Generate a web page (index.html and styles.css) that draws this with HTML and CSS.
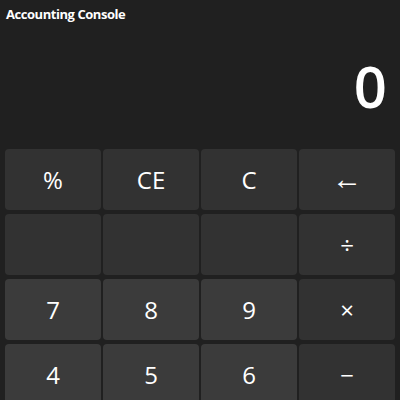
FILE: index.html
```html
<!DOCTYPE html>
<html>
<head>
<meta charset="utf-8">
<link rel="stylesheet" href="styles.css">
</head>
<body>
<div class="app">
  <div class="title">Accounting Console</div>
  <div class="display">0</div>
  <div class="keys">
    <button class="key op">%</button>
    <button class="key op">CE</button>
    <button class="key op">C</button>
    <button class="key op arrow">←</button>
    <button class="key op"></button>
    <button class="key op"></button>
    <button class="key op"></button>
    <button class="key op">÷</button>
    <button class="key num">7</button>
    <button class="key num">8</button>
    <button class="key num">9</button>
    <button class="key op">×</button>
    <button class="key num">4</button>
    <button class="key num">5</button>
    <button class="key num">6</button>
    <button class="key op">−</button>
  </div>
</div>
</body>
</html>
```
FILE: styles.css
```css
html, body {
  margin: 0;
  padding: 0;
  background: #202020;
  height: 100%;
  overflow: hidden;
}
.app {
  font-family: "Open Sans", "Noto Sans", sans-serif;
  color: #ffffff;
  display: flex;
  flex-direction: column;
}
.title {
  font-size: 13px;
  font-weight: 700;
  padding: 6px 0 0 6px;
  height: 22px;
  box-sizing: border-box;
  line-height: 16px;
  letter-spacing: -0.45px;
}
.display {
  font-size: 58px;
  font-weight: 600;
  line-height: 60px;
  text-align: right;
  padding: 34px 13px 0 0;
  height: 127px;
  box-sizing: border-box;
}
.keys {
  display: grid;
  grid-template-columns: repeat(4, 96px);
  grid-auto-rows: 61px;
  column-gap: 2px;
  row-gap: 4px;
  padding: 0 5px;
}
.key {
  border: none;
  border-radius: 4px;
  color: #ffffff;
  font-family: "Open Sans", "Noto Sans", sans-serif;
  font-size: 24px;
  padding: 0 0 1px 0;
  margin: 0;
}
.arrow {
  font-size: 30px;
  padding-bottom: 4px;
}
.op {
  background: #323232;
}
.num {
  background: #3b3b3b;
}
```
